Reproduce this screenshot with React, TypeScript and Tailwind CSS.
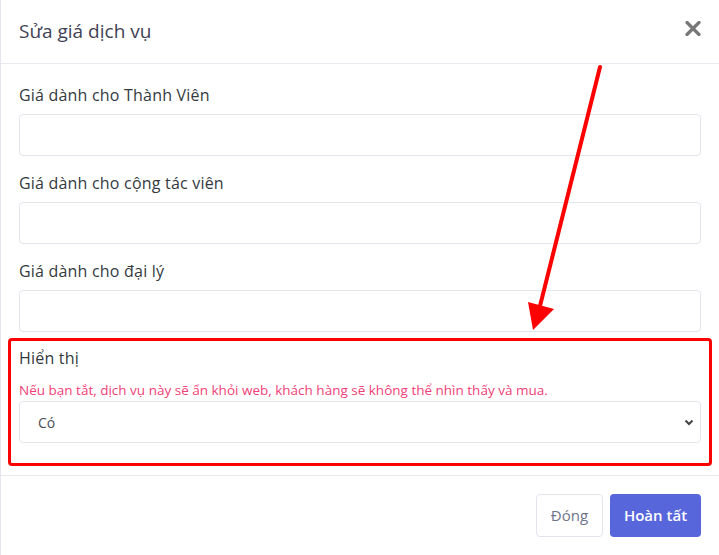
import React from "react";

const fields = ["Giá dành cho Thành Viên", "Giá dành cho cộng tác viên", "Giá dành cho đại lý"];

export default function App() {
  return (
    <div className="relative w-[719px] h-[555px] bg-white border-l border-[#e4e6ee] overflow-hidden font-['Open_Sans',sans-serif]">
      <div className="h-[64px] px-[18px] flex items-center justify-between border-b border-[#e9ebf0]">
        <h5 className="text-[19px] text-[#3f4254]">Sửa giá dịch vụ</h5>
        <svg width="16" height="15" viewBox="0 0 16 15" className="mt-[-6px]">
          <path d="M2 1.5 L14 13.5 M14 1.5 L2 13.5" stroke="#777" strokeWidth="3.2" strokeLinecap="round" />
        </svg>
      </div>

      <div className="px-[18px] pt-[21px] pb-[9px] border-b border-[#e9ebf0]">
        <div className="flex flex-col gap-[17px] mb-[6px]">
          {fields.map((f) => (
            <div key={f}>
              <label className="block text-[16px] leading-[20px] tracking-[0.2px] text-[#343a40] mb-[9px]">{f}</label>
              <div className="h-[42px] rounded-[4px] border border-[#e2e5ec] bg-white"></div>
            </div>
          ))}
        </div>

        <div className="mx-[-11px] px-[8px] pt-[7px] pb-[20px] border-[3px] border-[#ff0000] rounded-[4px]">
          <label className="block text-[16px] leading-[20px] tracking-[0.2px] text-[#343a40] mb-[13px]">Hiển thị</label>
          <p className="text-[13.5px] leading-[18px] text-[#ef3f78] mb-[2px]">
            Nếu bạn tắt, dịch vụ này sẽ ẩn khỏi web, khách hàng sẽ không thể nhìn thấy và mua.
          </p>
          <div className="h-[42px] rounded-[4px] border border-[#e2e5ec] bg-white flex items-center justify-between pl-[18px] pr-[6px]">
            <span className="text-[14px] text-[#495057]">Có</span>
            <svg width="10" height="7" viewBox="0 0 10 7">
              <path d="M1.5 1.5 L5 5 L8.5 1.5" fill="none" stroke="#444" strokeWidth="2" />
            </svg>
          </div>
        </div>
      </div>

      <div className="flex justify-end gap-[7px] px-[18px] pt-[18px]">
        <button className="h-[43px] w-[67px] rounded-[4px] border border-[#e4e4ee] bg-white text-[15px] text-[#6e7489]">Đóng</button>
        <button className="h-[43px] w-[91px] rounded-[4px] bg-[#5866dc] text-[15px] font-semibold text-white">Hoàn tất</button>
      </div>

      <svg className="absolute inset-0 pointer-events-none" width="719" height="555" viewBox="0 0 719 555">
        <line x1="599" y1="67" x2="539" y2="306" stroke="#ff0000" strokeWidth="4" strokeLinecap="round" />
        <polygon points="527,302 553,309 532,330" fill="#ff0000" />
      </svg>
    </div>
  );
}
